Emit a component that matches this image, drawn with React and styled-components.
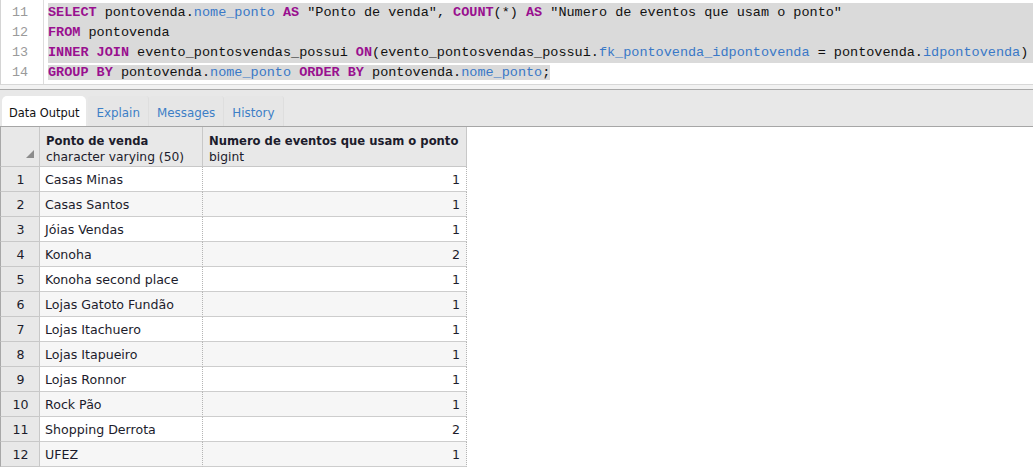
import React from 'react'
import styled, { createGlobalStyle } from 'styled-components'

const GlobalStyle = createGlobalStyle`
  html, body {
    margin: 0;
    padding: 0;
    background: #ffffff;
  }
`

const Page = styled.div`
  width: 1033px;
  height: 470px;
  display: flex;
  flex-direction: column;
  overflow: hidden;
  background: #ffffff;
`

const Editor = styled.div`
  display: flex;
  height: 85px;
  border-left: 1px solid #d4d4d4;
  border-bottom: 1px solid #d8d8d8;
  box-sizing: border-box;
`

const Gutter = styled.div`
  width: 43px;
  flex-shrink: 0;
  border-right: 1px solid #dddddd;
  padding-top: 3px;
  box-sizing: border-box;
  font-family: "Liberation Mono", monospace;
  font-size: 13.4px;
  color: #9a9a9a;
`

const LineNo = styled.div`
  height: 20px;
  line-height: 20px;
  padding-left: 11px;
`

const Code = styled.div`
  flex: 1;
  padding-top: 3px;
  padding-left: 4px;
  font-family: "Liberation Mono", monospace;
  font-size: 13.5px;
  color: #111111;
  white-space: pre;
`

const CodeLine = styled.div`
  height: 20px;
  line-height: 20px;
  background: ${p => (p.$full ? '#dadada' : 'transparent')};
`

const Sel = styled.span`
  background: #dadada;
`

const Kw = styled.span`
  color: #99108f;
  font-weight: bold;
`

const Id = styled.span`
  color: #3978c7;
`

const Splitter = styled.div`
  height: 5px;
  background: #f2f2f2;
  border-bottom: 1px solid #a9a9a9;
  box-sizing: border-box;
`

const TabBar = styled.div`
  height: 37px;
  background: #e8e8e8;
  display: flex;
  align-items: flex-end;
  padding-left: 2px;
  border-bottom: 1px solid #a6a6a6;
  box-sizing: border-box;
`

const Tab = styled.div`
  height: 30px;
  box-sizing: border-box;
  padding: 0 ${p => (p.$active ? '7px' : '8px')};
  display: flex;
  align-items: center;
  padding-top: 4px;
  font-family: "DejaVu Sans", Verdana, sans-serif;
  font-size: ${p => (p.$active ? '11.4px' : '11.9px')};
  color: ${p => (p.$active ? '#111111' : '#3d7fc6')};
  background: ${p => (p.$active ? '#ffffff' : '#e6e6e6')};
  border-radius: ${p => (p.$active ? '5px 5px 0 0' : '3px 3px 0 0')};
  border-right: ${p => (p.$active ? 'none' : '1px solid #dedede')};
  margin-right: ${p => (p.$active ? '2px' : '0')};
`

const Grid = styled.div`
  display: grid;
  grid-template-columns: 40px 163px 264px;
  grid-auto-rows: 25px;
  grid-template-rows: 40px;
  width: 467px;
  font-family: "DejaVu Sans", Verdana, sans-serif;
  font-size: 12.6px;
  color: #1c1c2c;
`

const Corner = styled.div`
  background: #e8e8e8;
  border-left: 1px solid #a8a8a8;
  border-right: 1px solid #c8c8c8;
  border-bottom: 1px solid #c8c8c8;
  box-sizing: border-box;
  display: flex;
  align-items: flex-end;
  justify-content: flex-end;
  padding: 0 5px 8px 0;
`

const HeadCell = styled.div`
  background: #e8e8e8;
  border-right: 1px solid #c8c8c8;
  border-bottom: 1px solid #c8c8c8;
  box-sizing: border-box;
  padding: 6px 0 0 6px;
  display: flex;
  flex-direction: column;
  font-size: 12.3px;
  line-height: 16px;
  white-space: nowrap;
`

const HeadName = styled.span`
  font-weight: bold;
  font-size: 11.6px;
`

const RowNum = styled.div`
  background: #e8e8e8;
  border-left: 1px solid #a8a8a8;
  border-right: 1px solid #c8c8c8;
  border-bottom: 1px solid #c8c8c8;
  box-sizing: border-box;
  display: flex;
  align-items: center;
  justify-content: center;
  padding: 1px 0 0 1px;
`

const Cell = styled.div`
  background: ${p => (p.$odd ? '#ffffff' : '#f6f6f6')};
  border-right: 1px dotted #b4b4b4;
  border-bottom: 1px solid #cdcdcd;
  box-sizing: border-box;
  display: flex;
  align-items: center;
  justify-content: ${p => (p.$num ? 'flex-end' : 'flex-start')};
  padding: 1px 6px 0 5px;
  white-space: nowrap;
`

const rows = [
  ['Casas Minas', 1],
  ['Casas Santos', 1],
  ['Jóias Vendas', 1],
  ['Konoha', 2],
  ['Konoha second place', 1],
  ['Lojas Gatoto Fundão', 1],
  ['Lojas Itachuero', 1],
  ['Lojas Itapueiro', 1],
  ['Lojas Ronnor', 1],
  ['Rock Pão', 1],
  ['Shopping Derrota', 2],
  ['UFEZ', 1],
]

function App() {
  return (
    <Page>
      <GlobalStyle />
      <Editor>
        <Gutter>
          <LineNo>11</LineNo>
          <LineNo>12</LineNo>
          <LineNo>13</LineNo>
          <LineNo>14</LineNo>
        </Gutter>
        <Code>
          <CodeLine $full>
            <Kw>SELECT</Kw> pontovenda.<Id>nome_ponto</Id> <Kw>AS</Kw> "Ponto de venda", <Kw>COUNT</Kw>(*) <Kw>AS</Kw> "Numero de eventos que usam o ponto"
          </CodeLine>
          <CodeLine $full>
            <Kw>FROM</Kw> pontovenda
          </CodeLine>
          <CodeLine $full>
            <Kw>INNER JOIN</Kw> evento_pontosvendas_possui <Kw>ON</Kw>(evento_pontosvendas_possui.<Id>fk_pontovenda_idpontovenda</Id> = pontovenda.<Id>idpontovenda</Id>)
          </CodeLine>
          <CodeLine>
            <Sel>
              <Kw>GROUP BY</Kw> pontovenda.<Id>nome_ponto</Id> <Kw>ORDER BY</Kw> pontovenda.<Id>nome_ponto</Id>;
            </Sel>
          </CodeLine>
        </Code>
      </Editor>
      <Splitter />
      <TabBar>
        <Tab $active>Data Output</Tab>
        <Tab>Explain</Tab>
        <Tab>Messages</Tab>
        <Tab>History</Tab>
      </TabBar>
      <Grid>
        <Corner>
          <svg width="8" height="8" viewBox="0 0 8 8">
            <polygon points="8,0 8,8 0,8" fill="#8c8c8c" />
          </svg>
        </Corner>
        <HeadCell>
          <HeadName>Ponto de venda</HeadName>
          <span>character varying (50)</span>
        </HeadCell>
        <HeadCell>
          <HeadName>Numero de eventos que usam o ponto</HeadName>
          <span>bigint</span>
        </HeadCell>
        {rows.map(([name, n], i) => (
          <React.Fragment key={name}>
            <RowNum>{i + 1}</RowNum>
            <Cell $odd={i % 2 === 0}>{name}</Cell>
            <Cell $odd={i % 2 === 0} $num>{n}</Cell>
          </React.Fragment>
        ))}
      </Grid>
    </Page>
  )
}

export default App
